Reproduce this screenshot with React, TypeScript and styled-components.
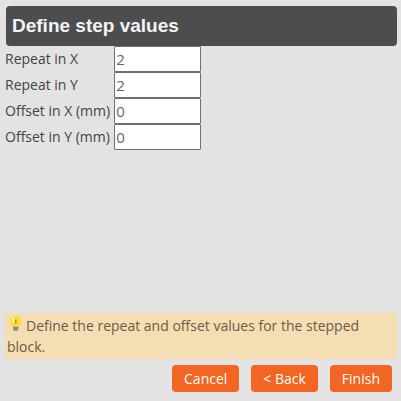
import React, { useState } from "react";
import styled, { createGlobalStyle } from "styled-components";

const GlobalStyle = createGlobalStyle`
  * { box-sizing: border-box; }
  body {
    margin: 0;
    background: #e3e3e3;
    color: #444;
    font: 14px/21px "Open Sans", sans-serif;
  }
`;

const Dialog = styled.form`
  display: flex;
  flex-direction: column;
  min-height: 100vh;
  padding: 6px 4px 9px 5px;
`;

const Title = styled.h1`
  margin: 0 0 0 1px;
  padding: 0 6px;
  border-radius: 4px;
  background: #4c4d4f;
  color: #f4f4f4;
  font: bold 19px/40px "Liberation Sans", Arial, sans-serif;
`;

const Fields = styled.div`
  display: grid;
  grid-template-columns: max-content 87px;
  grid-auto-rows: 26px;
  column-gap: 4px;
  align-items: center;
`;

const FieldLabel = styled.label`
  padding-bottom: 2px;
  white-space: nowrap;
`;

const FieldInput = styled.input`
  width: 100%;
  height: 26px;
  padding: 1px;
  border: 1px solid #707070;
  border-radius: 1px;
  background: #fff;
  color: #666;
  font: 15px "Open Sans", sans-serif;
`;

const Hint = styled.p`
  margin: auto 0 6px;
  padding: 2px;
  border-radius: 3px;
  background: #f5deb3;
  color: #6b5b48;
`;

const BulbIcon = styled.svg`
  width: 16px;
  height: 16px;
  margin-right: 3px;
  vertical-align: -1px;
`;

const Actions = styled.div`
  display: flex;
  justify-content: flex-end;
  gap: 12px;
  padding-right: 5px;
`;

const ActionButton = styled.button`
  height: 27px;
  padding: 0 12px;
  border: 0;
  border-radius: 4px;
  background: #f26522;
  color: #fff;
  font: 500 14px/27px "Open Sans", sans-serif;
  cursor: pointer;
`;

const fields = [
  { id: "repeat-x", label: "Repeat in X", value: "2" },
  { id: "repeat-y", label: "Repeat in Y", value: "2" },
  { id: "offset-x", label: "Offset in X (mm)", value: "0" },
  { id: "offset-y", label: "Offset in Y (mm)", value: "0" },
];

function Bulb() {
  return (
    <BulbIcon viewBox="0 0 16 16" aria-hidden="true">
      <path
        d="M8.7 0.5C5 .5 2.7 2.7 2.7 5.3c0 2.2 2 3.2 3 5.4h6c1-2.2 3-3.2 3-5.4C14.7 2.7 12.4.5 8.7.5Z"
        fill="#fbe02c"
        stroke="#f3d984"
        strokeWidth="0.6"
      />
      <path d="M4.6 5C4.6 3 6 1.8 7.6 1.8L7 8Z" fill="#fff38a" />
      <path d="M8 3.5h1.6l-.3 5h-1Z" fill="#dd8a10" />
      <path d="M6 10.5h5.4v2.7L9.7 15.2H7.7L6 13.2Z" fill="#a3a3a5" />
      <path d="M6 11.8h5.4M6.5 13.4h4.4" stroke="#74747a" strokeWidth="0.7" />
    </BulbIcon>
  );
}

export default function App() {
  const [values, setValues] = useState<Record<string, string>>(
    Object.fromEntries(fields.map((f) => [f.id, f.value]))
  );

  return (
    <>
      <GlobalStyle />
      <Dialog onSubmit={(e) => e.preventDefault()}>
        <Title>Define step values</Title>
        <Fields>
          {fields.map(({ id, label }) => (
            <React.Fragment key={id}>
              <FieldLabel htmlFor={id}>{label}</FieldLabel>
              <FieldInput
                id={id}
                type="text"
                value={values[id]}
                onChange={(e) => setValues({ ...values, [id]: e.target.value })}
              />
            </React.Fragment>
          ))}
        </Fields>
        <Hint>
          <Bulb />
          Define the repeat and offset values for the stepped block.
        </Hint>
        <Actions>
          <ActionButton type="button">Cancel</ActionButton>
          <ActionButton type="button">&lt; Back</ActionButton>
          <ActionButton type="submit">Finish</ActionButton>
        </Actions>
      </Dialog>
    </>
  );
}
